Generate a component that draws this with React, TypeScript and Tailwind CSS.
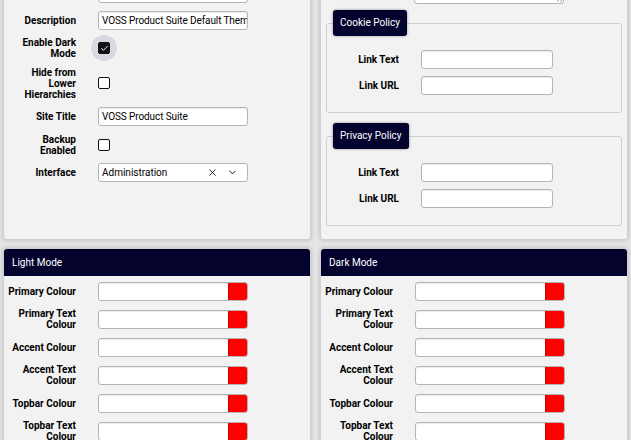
import React from "react";
import { X, ChevronDown, Check } from "lucide-react";

const Label = ({ children }: { children?: React.ReactNode }) => (
    <div className="w-[68px] shrink-0 text-right text-[10px] font-bold leading-[11px] text-black">{children}</div>
)

const TextInput = ({ value = "", w = "w-[150px]" }: { value?: string; w?: string }) => (
    <div className={`${w} h-[19px] shrink-0 overflow-hidden whitespace-nowrap rounded-[3px] border border-[#b4b4b4] bg-white px-[3px] text-[10px] leading-[17px] tracking-[-0.1px] text-black shadow-[inset_0_1px_1px_rgba(0,0,0,0.08)]`}>
        {value}
    </div>
)

const Checkbox = ({ checked = false, halo = false }: { checked?: boolean; halo?: boolean }) => (
    <span className="relative inline-flex h-[12px] w-[12px]">
        {halo && <span className="absolute -inset-[7px] rounded-full bg-[#d8d8e0]"></span>}
        <span className={`relative flex h-[12px] w-[12px] items-center justify-center rounded-[2px] border-[1.5px] border-[#111] ${checked ? "bg-[#111]" : "bg-white"}`}>
            {checked && <Check size={9} strokeWidth={2.5} color="#fff" />}
        </span>
    </span>
)

const Row = ({ label, children }: { label?: React.ReactNode; children: React.ReactNode }) => (
    <div className="flex items-center gap-[22px]">
        <Label>{label}</Label>
        {children}
    </div>
)

const ColourInput = () => (
    <div className="flex h-[19px] w-[150px] overflow-hidden rounded-[3px] border border-[#b4b4b4] bg-white shadow-[inset_0_1px_1px_rgba(0,0,0,0.08)]">
        <div className="flex-1"></div>
        <div className="w-[19px] border-l border-[#c00] bg-[#ff0000]"></div>
    </div>
)

const Policy = ({ title }: { title: string }) => (
    <fieldset className="rounded-[3px] border border-[#cfcfcf] px-[4px] pb-[17px]">
        <legend className="ml-[2px] h-[26px] rounded-[3px] bg-[#03032e] px-[7px] text-[10px] leading-[26px] text-white shadow-[0_0_3px_rgba(0,0,0,0.4)]">{title}</legend>
        <div className="flex flex-col gap-[7px] pt-[14px]">
            <Row label="Link Text"><TextInput w="w-[132px]" /></Row>
            <Row label="Link URL"><TextInput w="w-[132px]" /></Row>
        </div>
    </fieldset>
)

const colours = [
    "Primary Colour",
    "Primary Text Colour",
    "Accent Colour",
    "Accent Text Colour",
    "Topbar Colour",
    "Topbar Text Colour",
]

const ModePanel = ({ title }: { title: string }) => (
    <div className="rounded-[3px] border border-[#d0d0d0] bg-[#f2f2f2] shadow-[0_0_4px_rgba(0,0,0,0.2)]">
        <div className="h-[27px] rounded-t-[3px] bg-[#03032e] px-[8px] text-[10px] leading-[27px] text-white">{title}</div>
        <div className="flex flex-col gap-[6px] px-[4px] pt-[4px] pb-[10px]">
            {colours.map((c) => (
                <div key={c} className="flex h-[22px] items-center gap-[22px]">
                    <Label>{c}</Label>
                    <ColourInput />
                </div>
            ))}
        </div>
    </div>
)

export default function App() {
    return (
        <div className="h-screen overflow-hidden bg-[#e5e5e5] px-[3px] font-['Roboto',sans-serif]">
            <div className="-mt-[24px] grid grid-cols-2 gap-[9px]">
                <div className="rounded-b-[3px] border border-[#d0d0d0] bg-[#f2f2f2] px-[4px] pt-[7px] shadow-[0_0_4px_rgba(0,0,0,0.2)]">
                    <div className="flex flex-col gap-[7.5px]">
                        <Row><TextInput /></Row>
                        <Row label="Description"><TextInput value="VOSS Product Suite Default Theme" /></Row>
                        <Row label="Enable Dark Mode"><Checkbox checked halo /></Row>
                        <Row label="Hide from Lower Hierarchies"><Checkbox /></Row>
                        <Row label="Site Title"><TextInput value="VOSS Product Suite" /></Row>
                        <Row label="Backup Enabled"><Checkbox /></Row>
                        <Row label="Interface">
                            <div className="flex h-[19px] w-[150px] items-center rounded-[3px] border border-[#b4b4b4] bg-white pl-[3px] pr-[9px] text-[10px] text-black">
                                <span className="flex-1">Administration</span>
                                <X size={11} strokeWidth={1.8} className="mr-[9px]" />
                                <ChevronDown size={11} strokeWidth={2} />
                            </div>
                        </Row>
                    </div>
                </div>
                <div className="rounded-b-[3px] border border-[#d0d0d0] bg-[#f2f2f2] px-[5px] pt-[7px] pb-[13px] shadow-[0_0_4px_rgba(0,0,0,0.2)]">
                    <div className="flex items-center gap-[22px]">
                        <div className="w-[66px] shrink-0"></div>
                        <div className="relative h-[20px] w-[150px] rounded-[3px] border border-[#b4b4b4] bg-white">
                            <svg className="absolute bottom-[1px] right-[1px]" width="6" height="6" viewBox="0 0 6 6">
                                <path d="M6 1L1 6M6 4L4 6" stroke="#888" strokeWidth="0.8" />
                            </svg>
                        </div>
                    </div>
                    <div className="mt-[6px] flex flex-col gap-[10px]">
                        <Policy title="Cookie Policy" />
                        <Policy title="Privacy Policy" />
                    </div>
                </div>
            </div>
            <div className="mt-[8px] grid grid-cols-2 gap-[9px]">
                <ModePanel title="Light Mode" />
                <ModePanel title="Dark Mode" />
            </div>
        </div>
    )
}
